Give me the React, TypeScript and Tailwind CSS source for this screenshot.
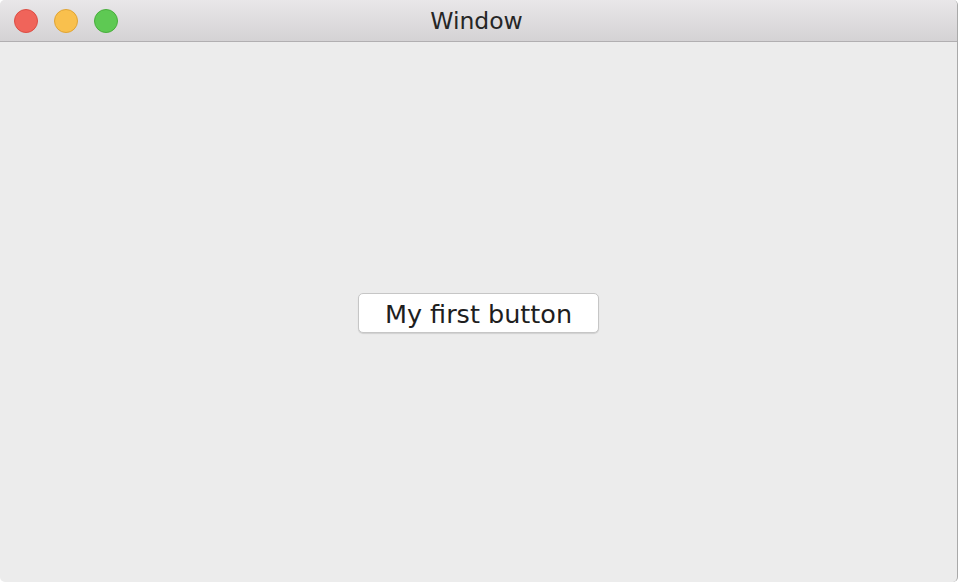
const Light = ({ color, ring }: { color: string; ring: string }) => (
  <span className={`block w-6 h-6 rounded-full border ${color} ${ring}`} />
);

export default function App() {
  return (
    <div className="w-[960px] h-[582px] bg-white overflow-hidden font-['DejaVu_Sans',Verdana,sans-serif]">
      <div className="w-[958px] h-[582px] flex flex-col bg-[#ececec] rounded-[5px] border-r border-[#a9a9a9] overflow-hidden">
        {/* Title bar */}
        <div className="relative h-[42px] flex items-center bg-gradient-to-b from-[#e9e7e9] to-[#d4d2d4] border-b border-[#b1afb1]">
          <div className="flex items-center gap-4 pl-[14px]">
            <Light color="bg-[#f0645a]" ring="border-[#dc4d43]" />
            <Light color="bg-[#f9c04d]" ring="border-[#e0a434]" />
            <Light color="bg-[#5ec953]" ring="border-[#48ae3c]" />
          </div>
          <div className="absolute inset-0 flex items-center justify-center pointer-events-none">
            <span className="text-[23.5px] text-[#262626] -translate-x-[2px] translate-y-[1px]">Window</span>
          </div>
        </div>

        {/* Content */}
        <div className="flex-1 flex items-center justify-center pt-[1px]">
          <button className="w-[241px] h-[40px] pt-[4px] bg-white rounded-[5px] border border-[#c6c6c6] shadow-[0_1px_1px_rgba(0,0,0,0.12)] text-[25.5px] leading-none text-[#1e1e1e] translate-x-[0px]">
            My first button
          </button>
        </div>
      </div>
    </div>
  );
}
